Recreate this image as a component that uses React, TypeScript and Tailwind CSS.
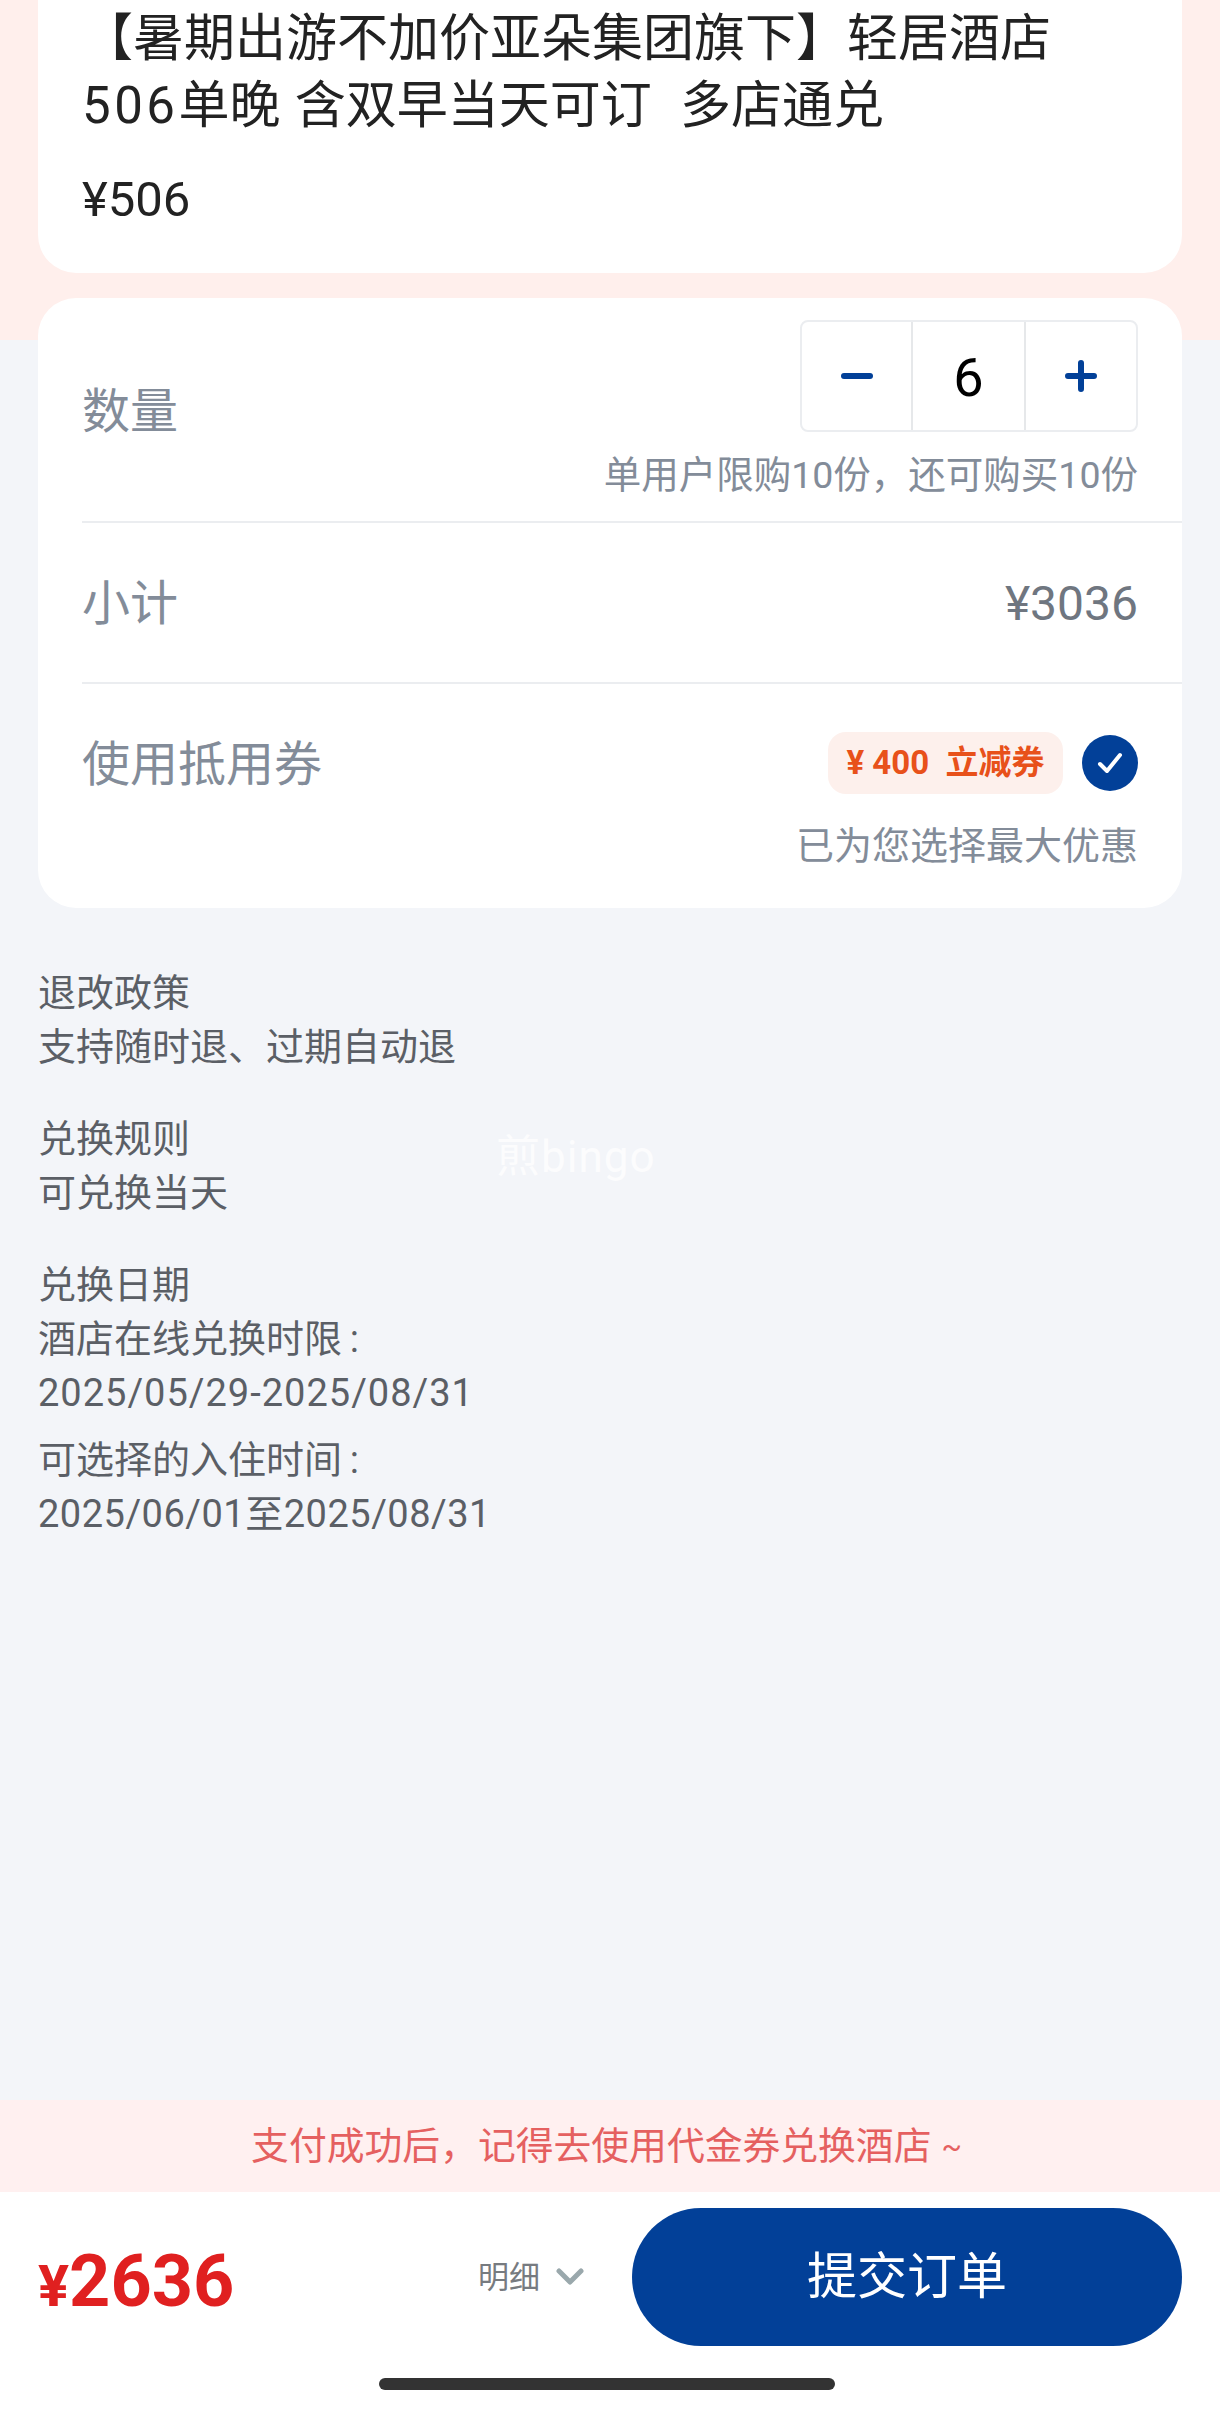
const sans = "font-['Roboto','Noto_Sans_CJK_SC',sans-serif]";

const rules = [
  { title: "退改政策", lines: ["支持随时退、过期自动退"] },
  { title: "兑换规则", lines: ["可兑换当天"] },
  { title: "兑换日期", lines: ["酒店在线兑换时限\u2009:"] },
];

function Stepper() {
  return (
    <div className="flex h-[112px] w-[338px] rounded-[8px] border-2 border-[#ebedf0] bg-white">
      <button className="flex w-[111px] items-center justify-center border-r-2 border-[#e6e8ea]">
        <svg width="32" height="32" viewBox="0 0 32 32">
          <path d="M3 16h26" stroke="#024098" strokeWidth="6" strokeLinecap="round" />
        </svg>
      </button>
      <div className="flex w-[111px] items-center justify-center pt-[2px] text-[54px] text-black">6</div>
      <button className="flex flex-1 items-center justify-center border-l-2 border-[#e6e8ea]">
        <svg width="32" height="32" viewBox="0 0 32 32">
          <path d="M3 16h26M16 3v26" stroke="#024098" strokeWidth="6" strokeLinecap="round" />
        </svg>
      </button>
    </div>
  );
}

export default function App() {
  return (
    <div
      className={`${sans} relative flex h-[2412px] w-full flex-col overflow-hidden bg-[linear-gradient(#ffefec_340px,#f3f5f9_340px)]`}
    >
      {/* product card, scrolled partly out of view */}
      <section className="mx-[38px] h-[273px] rounded-b-[38px] bg-white pl-[44px] pt-[5px] text-[#222222]">
        <p className="whitespace-pre text-[51px] leading-[67px]">【暑期出游不加价亚朵集团旗下】轻居酒店</p>
        <p className="whitespace-pre text-[51px] leading-[67px] [word-spacing:1.5px]">
          <span className="tracking-[3.5px]">506</span>单晚 含双早当天可订  多店通兑
        </p>
        <p className="mt-[31px] text-[49px] leading-[60px]">¥506</p>
      </section>

      {/* quantity, subtotal, voucher */}
      <section className="mx-[38px] mt-[25px] h-[610px] rounded-[38px] bg-white pl-[44px] text-[#838c99]">
        <div className="flex h-[225px] items-start justify-between border-b-2 border-[#ebedf0] pr-[44px] pt-[22px]">
          <span className="mt-[62px] text-[48px] leading-[60px]">数量</span>
          <div className="flex flex-col items-end">
            <Stepper />
            <p className="mt-[20px] text-[37.5px] leading-[46px]">单用户限购10份，还可购买10份</p>
          </div>
        </div>

        <div className="flex h-[161px] items-center justify-between border-b-2 border-[#ebedf0] pr-[44px] pt-[2px]">
          <span className="text-[48px] leading-[60px]">小计</span>
          <span className="text-[48px] leading-[60px] text-[#6f7680]">¥3036</span>
        </div>

        <div className="flex items-start justify-between pr-[44px] pt-[48px]">
          <span className="pt-[2px] text-[48px] leading-[62px]">使用抵用券</span>
          <div className="flex flex-col items-end">
            <div className="flex items-center gap-[19px]">
              <span className="flex h-[62px] w-[235px] items-center justify-center rounded-[18px] bg-[#fdf0ec] text-[33px] font-bold text-[#e8511a]">
                ¥ 400&nbsp;&nbsp;立减券
              </span>
              <span className="flex h-[56px] w-[56px] items-center justify-center rounded-full bg-[#024098]">
                <svg width="26" height="24" viewBox="0 0 26 24" fill="none">
                  <path d="M3 13l7 7L23 4" stroke="white" strokeWidth="4" strokeLinecap="round" strokeLinejoin="round" />
                </svg>
              </span>
            </div>
            <p className="mt-[29px] text-[38px] leading-[46px]">已为您选择最大优惠</p>
          </div>
        </div>
      </section>

      {/* policy text */}
      <section className="ml-[38px] mt-[58px] text-[38px] leading-[54px] text-[#5b5f66]">
        <div className="flex flex-col gap-[38px]">
          {rules.map((rule) => (
            <div key={rule.title}>
              <p>{rule.title}</p>
              {rule.lines.map((line) => (
                <p key={line}>{line}</p>
              ))}
              {rule.title === "兑换日期" && <p className="tracking-[1px]">2025/05/29-2025/08/31</p>}
            </div>
          ))}
        </div>
        <div className="mt-[13px]">
          <p>可选择的入住时间{"\u2009"}:</p>
          <p className="tracking-[0.5px]">2025/06/01至2025/08/31</p>
        </div>
      </section>

      <span className="absolute left-[496px] top-[1130px] text-[44px] leading-[54px] tracking-[1px] text-white/75">煎bingo</span>

      {/* checkout bar */}
      <div className="mt-auto flex h-[92px] items-center justify-center bg-[#fff0f0] pr-[7px] text-[37.8px] text-[#e56060]">
        支付成功后，记得去使用代金券兑换酒店
        <span className="ml-[10px] text-[30px]">~</span>
      </div>
      <footer className="flex h-[220px] flex-col bg-white px-[38px] pt-[16px]">
        <div className="flex h-[138px] items-center">
          <div className="mt-[10px] flex items-baseline font-bold text-[#e02020]">
            <span className="text-[58px] leading-none">¥</span>
            <span className="text-[72px] leading-none">2636</span>
          </div>
          <div className="ml-auto mr-[48px] flex items-center gap-[16px]">
            <span className="text-[31px] leading-none text-[#777b80]">明细</span>
            <svg width="28" height="18" viewBox="0 0 28 18" fill="none">
              <path d="M3 3l11 11L25 3" stroke="#9aa8ac" strokeWidth="5" strokeLinecap="round" strokeLinejoin="round" />
            </svg>
          </div>
          <button className="flex h-[138px] w-[550px] items-center justify-center rounded-[69px] bg-[#024098] text-[50px] text-white">
            提交订单
          </button>
        </div>
        <div className="ml-[341px] mt-[32px] h-[12px] w-[456px] rounded-full bg-[#333333]" />
      </footer>
    </div>
  );
}
